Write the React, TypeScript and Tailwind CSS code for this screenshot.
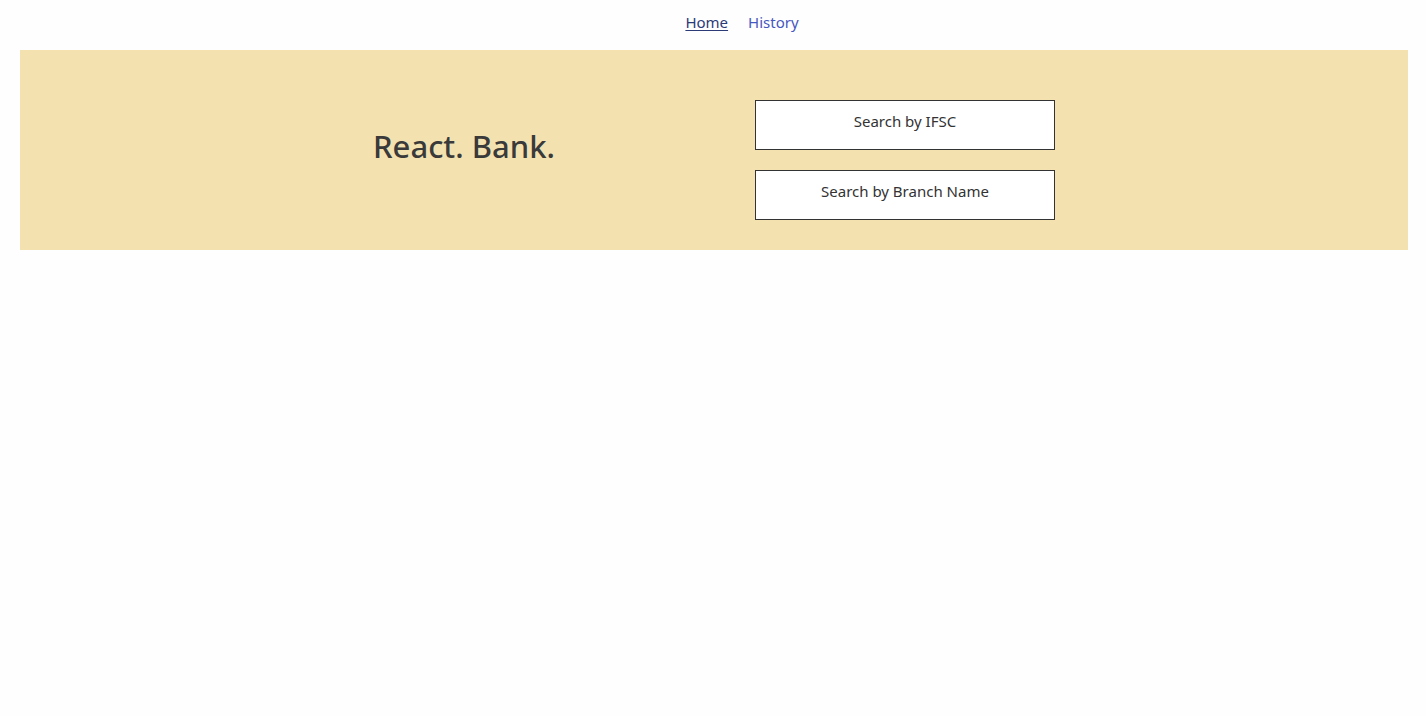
import React from 'react';

const font = { fontFamily: '"Noto Sans", "Open Sans", sans-serif' };

export default function App() {
  const links = [
    { label: 'Home', active: true },
    { label: 'History', active: false },
  ];

  const actions = ['Search by IFSC', 'Search by Branch Name'];

  return (
    <div className="min-h-screen bg-[#fefefe] text-[#333]" style={font}>
      <nav className="flex justify-center gap-5 pl-[58px] pt-[11px] h-[50px]">
        {links.map(link => (
          <a
            key={link.label}
            href="#"
            className={`text-[15px] leading-[22px] ${
              link.active ? 'text-[#2c3a78] underline underline-offset-2' : 'text-[#4657c0]'
            }`}
          >
            {link.label}
          </a>
        ))}
      </nav>

      <header className="ml-[20px] mr-[18px] bg-[#f3e2b0] pt-[50px] pb-[30px] flex justify-center items-start gap-[200px]">
        <h1 className="mt-[26px] text-[31px] leading-[40px] font-medium text-[#3a3a3a]">React. Bank.</h1>
        <div className="flex flex-col gap-5">
          {actions.map(label => (
            <button
              key={label}
              className="w-[300px] h-[50px] bg-white border border-[#333] flex justify-center items-start pt-[10px] text-[15px] leading-[20px] text-[#333]"
            >
              {label}
            </button>
          ))}
        </div>
      </header>
    </div>
  );
}
